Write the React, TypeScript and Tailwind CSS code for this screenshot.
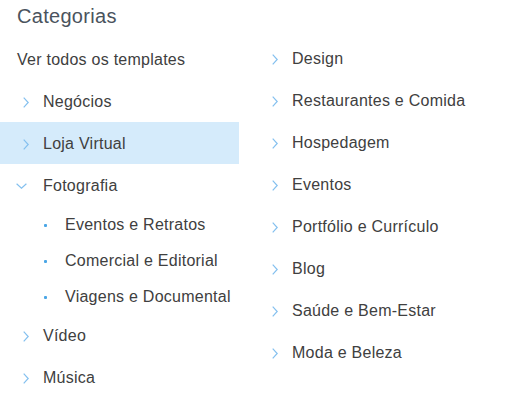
import React from "react";

const LEFT = ["Negócios", "Loja Virtual"];
const SUB = ["Eventos e Retratos", "Comercial e Editorial", "Viagens e Documental"];
const RIGHT = [
  "Design",
  "Restaurantes e Comida",
  "Hospedagem",
  "Eventos",
  "Portfólio e Currículo",
  "Blog",
  "Saúde e Bem-Estar",
  "Moda e Beleza",
];

function ChevronRight() {
  return (
    <svg width="6" height="11" viewBox="0 0 6 11" className="shrink-0">
      <path d="M0.7 0.6 L5.2 5.5 L0.7 10.4" fill="none" stroke="#84c0ef" strokeWidth="1.2" />
    </svg>
  );
}

function ChevronDown() {
  return (
    <svg width="11" height="6" viewBox="0 0 11 6" className="shrink-0">
      <path d="M0.6 0.7 L5.5 5.2 L10.4 0.7" fill="none" stroke="#84c0ef" strokeWidth="1.2" />
    </svg>
  );
}

function Row({ label, active, open }: { label: string; active?: boolean; open?: boolean }) {
  return (
    <div className={`flex items-center h-[42px] pt-[2px] ${active ? "bg-[#d5ebfb]" : ""}`}>
      {open ? (
        <div className="w-[43px] pl-[16px] flex">
          <ChevronDown />
        </div>
      ) : (
        <div className="w-[43px] pl-[23px] flex">
          <ChevronRight />
        </div>
      )}
      <span>{label}</span>
    </div>
  );
}

export default function App() {
  return (
    <div className="w-[510px] h-[406px] bg-white text-[16px] tracking-[0.25px] text-[#404040] font-['Liberation_Sans',Arial,sans-serif] overflow-hidden">
      <div className="h-[37px] pl-[17px] flex items-center">
        <h2 className="text-[20px] tracking-[0.3px] text-[#4a535d] leading-none -mt-[5px]">Categorias</h2>
      </div>
      <div className="flex">
        <div className="w-[239px]">
          <div className="h-[43px] flex items-center pl-[17px] pt-[2px]">Ver todos os templates</div>
          {LEFT.map((l, i) => (
            <Row key={l} label={l} active={i === 1} />
          ))}
          <Row label="Fotografia" open />
          {SUB.map((s) => (
            <div key={s} className="flex items-center h-[36px] pt-[2px]">
              <div className="w-[65px] pl-[44px] flex">
                <span className="w-[3px] h-[3px] rounded-[1px] bg-[#4aa6e6]" />
              </div>
              <span>{s}</span>
            </div>
          ))}
          <Row label="Vídeo" />
          <Row label="Música" />
        </div>
        <div className="flex-1 pl-[33px]">
          {RIGHT.map((r) => (
            <div key={r} className="flex items-center h-[42px] pt-[2px]">
              <div className="w-[20px] flex">
                <ChevronRight />
              </div>
              <span>{r}</span>
            </div>
          ))}
        </div>
      </div>
    </div>
  );
}
